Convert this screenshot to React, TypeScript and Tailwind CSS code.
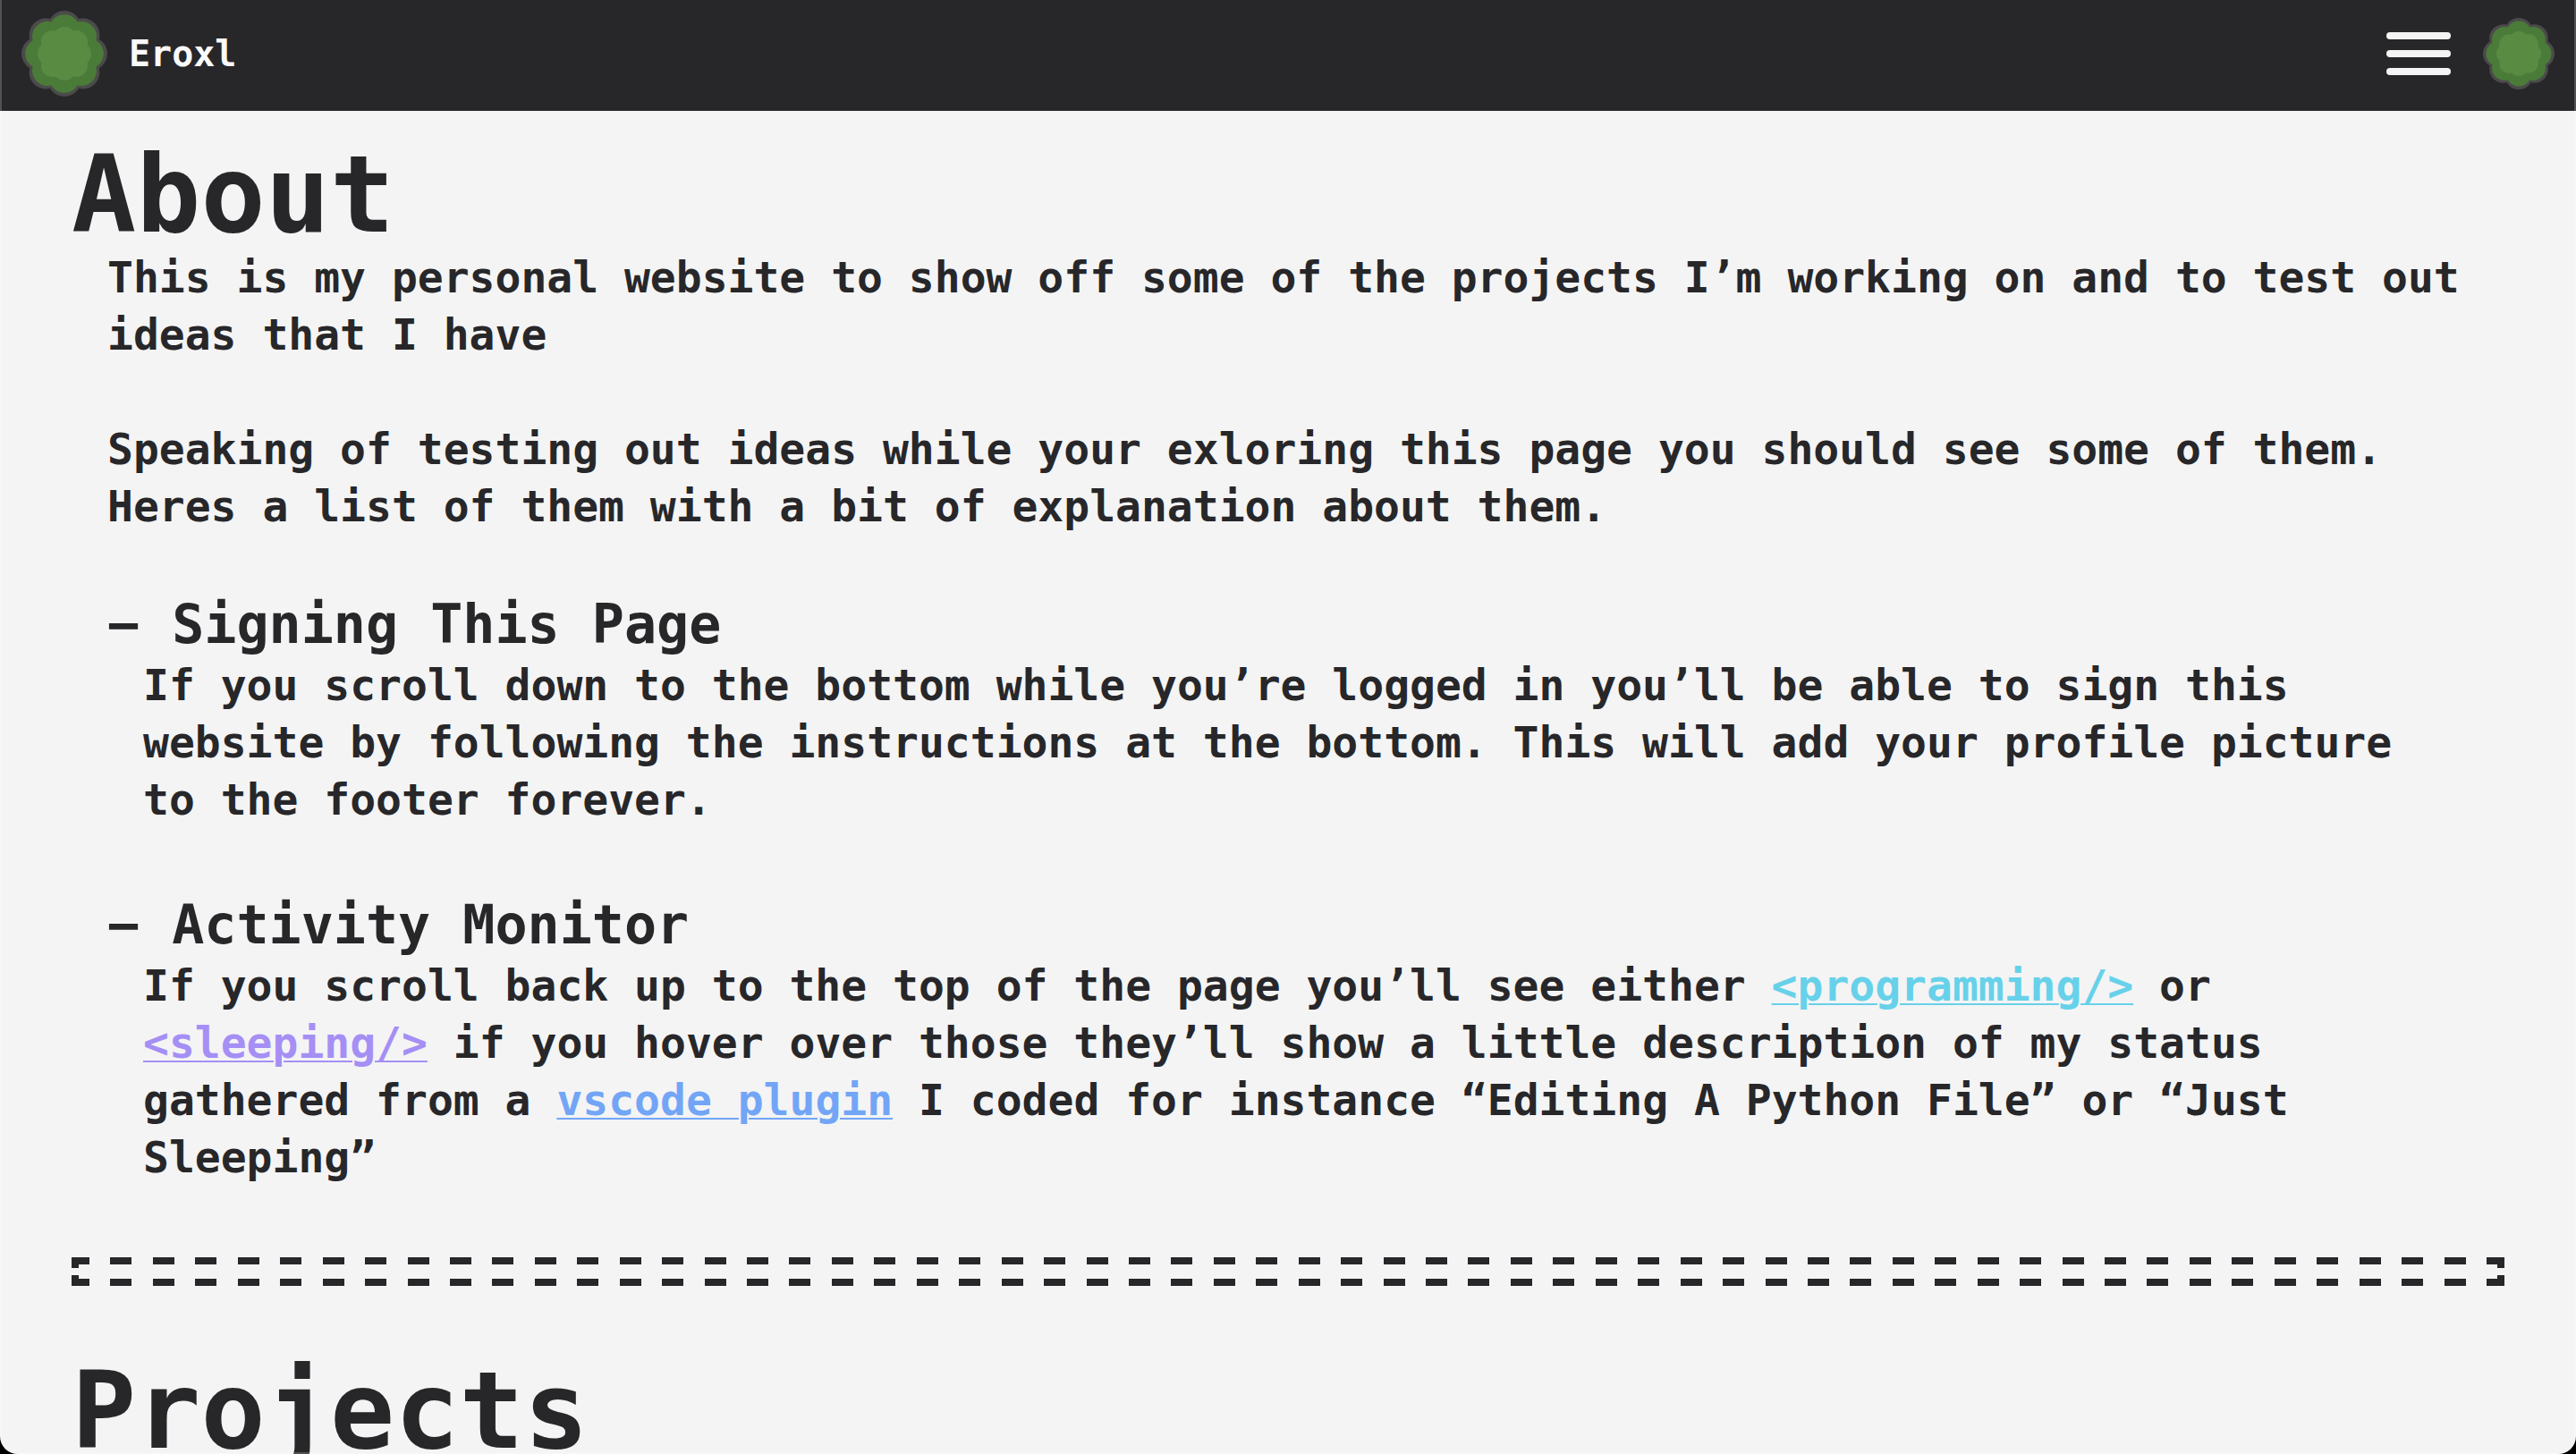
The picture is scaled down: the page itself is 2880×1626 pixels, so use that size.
import React from "react";

const LOBES = [0, 45, 90, 135, 180, 225, 270, 315];

type ScallopProps = { distance: number; diagonal?: number; radius: number; fill: string };

function Scallop({ distance, diagonal = distance, radius, fill }: ScallopProps) {
  return (
    <g fill={fill}>
      <circle cx="48" cy="48" r={distance} />
      {LOBES.map((angle) => (
        <circle
          key={angle}
          cx={48 + (angle % 90 === 0 ? distance : diagonal)}
          cy="48"
          r={radius}
          transform={`rotate(${angle} 48 48)`}
        />
      ))}
    </g>
  );
}

function Bush({ className }: { className: string }) {
  return (
    <svg viewBox="0 0 96 96" className={className} aria-hidden="true">
      <Scallop distance={29.4} radius={18.6} fill="#4c4b4b" />
      <Scallop distance={26.8} radius={17} fill="#4b7b38" />
      <Scallop distance={17} diagonal={18.5} radius={13} fill="#598b43" />
    </svg>
  );
}

function Header() {
  return (
    <header className="flex items-center justify-between bg-zinc-800 pt-3 pr-6 pb-4 pl-6">
      <a href="#home" className="flex items-center gap-6 text-[40px] leading-12 text-zinc-50">
        <Bush className="size-24" />
        Eroxl
      </a>
      <div className="flex items-center gap-9">
        <button type="button" aria-label="Open menu" className="flex w-18 flex-col gap-3">
          <span className="h-2 w-full rounded-full bg-[#f4f4f4]" />
          <span className="h-2 w-full rounded-full bg-[#f4f4f4]" />
          <span className="h-2 w-full rounded-full bg-[#f4f4f4]" />
        </button>
        <button type="button" aria-label="Profile">
          <Bush className="size-20" />
        </button>
      </div>
    </header>
  );
}

function DashedDivider() {
  return (
    <div role="separator" className="my-20 flex h-8 justify-between text-zinc-800">
      <span className="flex w-5 flex-col justify-between border-y-8">
        <span className="h-1 w-2 bg-current" />
        <span className="h-1 w-2 bg-current" />
      </span>
      {Array.from({ length: 56 }, (_, i) => (
        <span key={i} className="w-6 border-y-8" />
      ))}
      <span className="flex w-5 flex-col items-end justify-between border-y-8">
        <span className="h-1 w-2 bg-current" />
        <span className="h-1 w-2 bg-current" />
      </span>
    </div>
  );
}

function Entry({ title, children }: { title: string; children: React.ReactNode }) {
  return (
    <section>
      <h2 className="text-[60px] leading-18">− {title}</h2>
      <p className="mx-10">{children}</p>
    </section>
  );
}

export default function App() {
  return (
    <div className="h-screen bg-black">
      <div className="relative h-full overflow-hidden rounded-b-[20px] bg-[#f4f4f4] font-['DejaVu_Sans_Mono',monospace] font-bold text-zinc-800">
        <Header />
        <main className="px-20 pt-[34px]">
          <h1 className="text-[120px] leading-none">About</h1>
          <div className="mx-10 flex flex-col text-5xl leading-16">
            <p>
              This is my personal website to show off some of the projects I’m working on and to test out ideas that I
              have
            </p>
            <p className="mt-16">
              Speaking of testing out ideas while your exloring this page you should see some of them. Heres a list of
              them with a bit of explanation about them.
            </p>
            <div className="mt-16 flex flex-col gap-18">
              <Entry title="Signing This Page">
                If you scroll down to the bottom while you’re logged in you’ll be able to sign this website by following
                the instructions at the bottom. This will add your profile picture to the footer forever.
              </Entry>
              <Entry title="Activity Monitor">
                If you scroll back up to the top of the page you’ll see either{" "}
                <a href="#programming" className="text-[#67d1ea] underline decoration-2 underline-offset-3">
                  {"<programming/>"}
                </a>{" "}
                or{" "}
                <a href="#sleeping" className="text-[#a58ff5] underline decoration-2 underline-offset-3">
                  {"<sleeping/>"}
                </a>{" "}
                if you hover over those they’ll show a little description of my status gathered from a{" "}
                <a href="#vscode-plugin" className="text-[#72a5f6] underline decoration-2 underline-offset-3">
                  vscode plugin
                </a>{" "}
                I coded for instance “Editing A Python File” or “Just Sleeping”
              </Entry>
            </div>
          </div>
          <DashedDivider />
          <h1 className="text-[120px] leading-none">Projects</h1>
        </main>
        <div className="pointer-events-none absolute inset-0 rounded-b-[20px] border-x-2 border-b-2 border-white/20" />
      </div>
    </div>
  );
}
